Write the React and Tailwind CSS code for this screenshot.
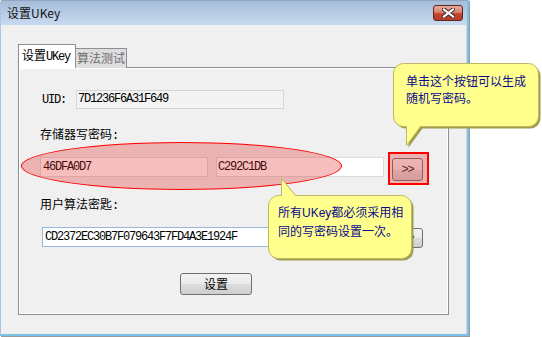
import React from "react";

const mono = "font-['Liberation_Mono','Noto_Sans_CJK_SC',monospace] text-[12px] tracking-[-1.2px]";
const btn =
  "rounded-[3px] border border-[#707070] bg-[linear-gradient(#f2f2f2_0%,#ebebeb_50%,#dddddd_50%,#cfcfcf_100%)]";
const bubbleFill = "#ffff8e";
const bubbleStroke = "#bdb866";
const bubbleShade = "#a19d4c";

function CloseButton() {
  return (
    <div className="w-[30px] h-[16px] rounded-[3px] border border-[#5c2624] bg-[linear-gradient(#e8a99b_0%,#d88370_45%,#c2462f_55%,#b53d2a_100%)] flex items-center justify-center">
      <svg width="13" height="10" viewBox="0 0 13 10">
        <path d="M2 1.5 L11 8.5 M11 1.5 L2 8.5" stroke="#3a2424" strokeWidth="4" strokeLinecap="square" />
        <path d="M2 1.5 L11 8.5 M11 1.5 L2 8.5" stroke="#ffffff" strokeWidth="2.2" strokeLinecap="square" />
      </svg>
    </div>
  );
}

function Bubble({ d, className }) {
  return (
    <svg className={className} width="152" height="90" viewBox="0 0 152 90">
      <path d={d} fill={bubbleShade} transform="translate(2 2)" />
      <path d={d} fill={bubbleFill} stroke={bubbleStroke} strokeWidth="1" />
    </svg>
  );
}

export default function App() {
  return (
    <div className="relative w-[542px] h-[337px] bg-white overflow-hidden font-['Noto_Sans_CJK_SC',sans-serif] text-black">
      {/* window */}
      <div className="w-[469px] h-[336px] flex flex-col border-l border-l-[#a9c6e6] border-r-2 border-r-[#79c3e6] border-b-2 border-b-[#79c3e6] shadow-[1px_1px_0_#9a9a9a] rounded-tl-[3px]">
        <div className="h-[25px] flex items-center justify-between pl-[6px] pr-[4px] border-t border-[#8fa5c2] bg-[linear-gradient(#a6bcd8,#c7daf0)]">
          <span className="text-[12px] leading-[16px] text-[#111]">设置UKey</span>
          <CloseButton />
        </div>

        <div className="flex-1 bg-[#f0f0f0] pt-[19px] pl-[17px] border-r border-[#d6d6d6]">
          {/* tabs */}
          <div className="flex items-end h-[24px] -mb-px">
            <div className="relative z-10 w-[58px] h-[24px] border border-b-0 border-[#8e8f96] bg-white pl-[3px] pt-[2px] text-[12px] leading-[16px] whitespace-nowrap">
              设置<span className={mono}>UKey</span>
            </div>
            <div className="w-[51px] h-[20px] border-t border-r border-[#8e8f96] bg-[#dedede] pl-[1px] pt-[1px] text-[12px] leading-[16px] text-[#6e6e6e] whitespace-nowrap">
              算法测试
            </div>
          </div>

          {/* panel */}
          <div className="w-[431px] h-[248px] border border-[#8e8f96] shadow-[inset_0_0_0_1px_#ffffff] bg-[#f0f0f0] flex flex-col items-start">
            <div className="mt-[22px] ml-[23px] flex items-center h-[19px]">
              <span className={`${mono} w-[34px]`}>UID:</span>
              <div className={`${mono} w-[208px] h-[19px] border border-[#d5d5d5] bg-[#f3f3f3] pl-[1px] leading-[17px]`}>
                7D1236F6A31F649
              </div>
            </div>

            <div className="mt-[17px] ml-[21px] text-[12px] leading-[16px]">
              存储器写密码<span className={mono}>:</span>
            </div>

            <div className="mt-[13px] ml-[21px] flex items-start">
              <div className={`${mono} w-[168px] h-[20px] border border-[#dcdcdc] bg-white pl-[2px] leading-[18px]`}>
                46DFA0D7
              </div>
              <div className={`${mono} ml-[8px] w-[168px] h-[20px] border border-[#dcdcdc] bg-white pl-[1px] leading-[18px]`}>
                C292C1DB
              </div>
              <div className={`${btn} ${mono} ml-[8px] mt-[1px] w-[31px] h-[23px] flex items-center justify-center text-[#222]`}>
                &gt;&gt;
              </div>
            </div>

            <div className="mt-[15px] ml-[21px] text-[12px] leading-[16px]">
              用户算法密匙<span className={mono}>:</span>
            </div>

            <div className="mt-[13px] ml-[23px] flex items-start">
              <div className={`${mono} w-[342px] h-[20px] border border-[#94b8dc] bg-white pl-[2px] leading-[18px]`}>
                CD2372EC30B7F079643F7FD4A3E1924F
              </div>
              <div className={`${btn} ${mono} ml-[8px] mt-[1px] w-[31px] h-[20px] flex items-center justify-center`}>
                &gt;&gt;
              </div>
            </div>

            <div className={`${btn} mt-[25px] ml-[161px] w-[72px] h-[22px] flex items-center justify-center text-[12px] leading-[16px]`}>
              设置
            </div>
          </div>
        </div>
      </div>

      {/* annotations */}
      <div className="absolute left-[21px] top-[142px] w-[321px] h-[48px] rounded-[50%] border border-[#ff0000] bg-[rgba(230,40,40,0.3)]" />
      <div className="absolute left-[388px] top-[152px] w-[41px] h-[33px] border-2 border-[#ff0000] bg-[rgba(230,40,40,0.3)]" />

      <Bubble
        className="absolute left-[390px] top-[60px]"
        d="M13.5 3.5 H138.5 A10 10 0 0 1 148.5 13.5 V56.5 A10 10 0 0 1 138.5 66.5 H30.5 L16.5 85.5 V66.5 H13.5 A10 10 0 0 1 3.5 56.5 V13.5 A10 10 0 0 1 13.5 3.5 Z"
      />
      <div className="absolute left-[406px] top-[72px] text-[12px] leading-[17px] text-[#0a0a8c] whitespace-nowrap">
        单击这个按钮可以生成
        <br />
        随机写密码。
      </div>

      <Bubble
        className="absolute left-[265px] top-[175px]"
        d="M13.5 20.5 H16.5 V3.5 L30.5 20.5 H136.5 A10 10 0 0 1 146.5 30.5 V73.5 A10 10 0 0 1 136.5 83.5 H13.5 A10 10 0 0 1 3.5 73.5 V30.5 A10 10 0 0 1 13.5 20.5 Z"
      />
      <div className="absolute left-[278px] top-[203px] text-[12px] leading-[17px] text-[#0a0a8c] whitespace-nowrap">
        所有<span className="font-['Liberation_Sans',sans-serif]">UKey</span>都必须采用相
        <br />
        同的写密码设置一次。
      </div>
    </div>
  );
}
